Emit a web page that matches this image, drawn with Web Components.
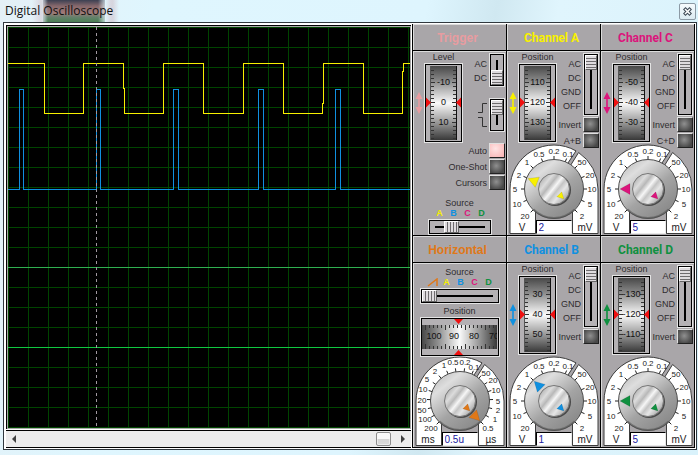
<!DOCTYPE html>
<html lang="en">
<head>
<meta charset="utf-8">
<title>Digital Oscilloscope</title>
<style>
  body { margin: 0; font-family: "Liberation Sans", Arial, sans-serif; font-size: 9px; color: #2e2b2e; }
</style>
</head>
<body>
<scope-window caption="Digital Oscilloscope">
  <scope-screen slot="screen"></scope-screen>
  <scope-scrollbar slot="screen"></scope-scrollbar>
  <trigger-panel></trigger-panel>
  <channel-panel name="Channel A" color="#f8f000" values="110,120,130" mix="A+B" angle="-68" reading="2"></channel-panel>
  <channel-panel name="Channel C" color="#dc147c" values="-50,-40,-30" mix="C+D" angle="-90" reading="5"></channel-panel>
  <horizontal-panel></horizontal-panel>
  <channel-panel name="Channel B" color="#1090e0" values="30,40,50" angle="-45" reading="1"></channel-panel>
  <channel-panel name="Channel D" color="#109040" values="-130,-120,-110" angle="-90" reading="5"></channel-panel>
</scope-window>

<script>
const define = (name, render) => customElements.define(name, class extends HTMLElement {
  connectedCallback() {
    if (this.shadowRoot) return;
    const t = document.createElement('template');
    t.innerHTML = render(n => this.getAttribute(n), this);
    this.attachShadow({ mode: 'open' }).append(t.content.cloneNode(true));
  }
});
const polar = (deg, r) => {
  const a = deg * Math.PI / 180;
  return [Math.round(Math.sin(a) * r * 10) / 10, Math.round(-Math.cos(a) * r * 10) / 10];
};

/* Window frame with its caption bar */
define('scope-window', a => `
<style>
  :host { display: flex; flex-direction: column; min-height: 100vh; box-sizing: border-box; padding: 0 1px 5px 3px;
    background:
      linear-gradient(90deg, transparent, #c9a9b455 8px 10px, transparent 14px) 32px 0 / 14px 22px no-repeat,
      linear-gradient(90deg, transparent, #c9a9b466 6px 8px, transparent 14px) 105px 0 / 14px 22px no-repeat,
      linear-gradient(90deg, #e0f5fccc, transparent 6px 56px, #e0f5fccc) 42px 0 / 64px 22px no-repeat,
      linear-gradient(#3c4052, #86686c 6px, #a07a78 13px, #66806c 17px, #4a8054 22px) 43px 0 / 62px 22px no-repeat,
      linear-gradient(100deg, #e4f0f6, #dff6fe 20%, #def5fe 55%, #d0e8f1 64%, #e0f5fd 72%, #d9f2fb); }
  header { display: flex; align-items: center; justify-content: space-between; height: 22px; padding-left: 2px; }
  h1 { margin: 0; font: 12px/22px "Open Sans", "Noto Sans", sans-serif; color: #111; }
  header button { width: 17px; height: 17px; margin-right: 1px; padding: 0; border: 1px solid #8c9aa5; border-radius: 2px;
    background: linear-gradient(#f6fbfd, #dcebf2); display: grid; place-items: center; }
  .frame { flex: 1; display: grid; grid-template-columns: minmax(0, 1fr) auto; border: 1px solid #30383e; background: #fff; padding: 1px 1px 1px 2px; }
  .left { display: flex; flex-direction: column; padding: 1px 1px 0 0; min-width: 0; }
  .right { display: grid; grid-template-columns: repeat(3, 93px); grid-auto-rows: 1fr; gap: 1px; background: #000; padding: 0 1px 1px; }
</style>
<header><h1>${a('caption')}</h1>
  <button aria-label="Close"><svg width="11" height="11" viewBox="0 0 11 11"><g fill="none" stroke-linecap="square"><path d="M3.500 3.500 7.500 7.500M7.500 3.500 3.500 7.500" stroke="#3c4854" stroke-width="3.500"/><path d="M3.500 3.500 7.500 7.500M7.500 3.500 3.500 7.500" stroke="#fff" stroke-width="1.500"/></g></svg></button>
</header>
<div class="frame"><div class="left"><slot name="screen"></slot></div><div class="right"><slot></slot></div></div>`);

/* Trace display */
define('scope-screen', () => `
<style>
  :host { flex: 1; display: flex; border: solid #000; border-width: 1px 0 0 1px; margin-bottom: 1px; }
  .crt { flex: 1; border: 1px solid #a8a8a8; background:
    linear-gradient(90deg, #004400 1px, transparent 1px) 0 0 / 20px 20px,
    linear-gradient(#004400 1px, transparent 1px) 0 0 / 20px 20px, #000; min-width: 0; overflow: hidden; }
  svg { display: block; width: 100%; height: 401px; }
</style>
<div class="crt"><svg shape-rendering="crispEdges" fill="none" stroke-width="1" role="img" aria-label="Traces">
  <path d="M0 320.5H2000" stroke="#10c840"/>
  <path d="M0 240.5H2000" stroke="#30b050"/>
  <path d="M0 162.5H11.5V62.5H15.5V162.5H88.5V62.5H92.5V162.5H165.5V62.5H170.5V162.5H250.5V62.5H255.5V162.5H327.5V62.5H332.5V162.5H2000" stroke="#1090e0"/>
  <path d="M0 36.5H36.5V86.5H75.5V36.5H115.5V61.5H116.5V86.5H155.5V36.5H195.5V86.5H235.5V36.5H275.5V86.5H314.5V76.5H315.5V36.5H355.5V86.5H394.5V44.5H395.5V36.5H402" stroke="#f8f000"/>
  <path d="M88.5 0V401" stroke="#a098a0" stroke-dasharray="3 3"/>
</svg></div>`);

define('scope-scrollbar', () => `
<style>
  :host { display: flex; align-items: center; height: 16px; border: solid #000; border-width: 1px 0; background: #ececec; }
  button { width: 16px; height: 16px; padding: 0; border: 0; background: none; display: grid; place-items: center; }
  input { flex: 1; min-width: 0; height: 16px; margin: 0; appearance: none; background: none; }
  input::-webkit-slider-thumb { appearance: none; width: 15px; height: 14px; box-sizing: border-box; border: 1px solid #8e8e8e; border-radius: 2px;
    background: linear-gradient(#f8f8f8 48%, #d4d4d4 52%, #dadada); box-shadow: inset 0 0 0 1px #fafafa88; }
</style>
<button aria-label="Scroll left"><svg width="6" height="8"><path d="M5 0V8L1 4Z" fill="#404040"/></svg></button>
<input type="range" min="0" max="100" value="99" aria-label="Time offset">
<button aria-label="Scroll right"><svg width="6" height="8"><path d="M1 0V8L5 4Z" fill="#404040"/></svg></button>`);

/* Heading bar above a body in which the dial sits at the foot */
define('control-panel', a => `
<style>
  :host { display: flex; flex-direction: column; background: #a9a6a9; height: 100%; }
  h2 { margin: 0; height: 26px; box-sizing: border-box; padding: 2px 4px 0 0; text-align: center; color: ${a('color')};
    font: bold 12px/25px ${a('face') || '"Liberation Sans"'}, sans-serif; box-shadow: inset 1px 1px #dcdcdc; }
  .body { flex: 1; min-height: 184px; display: grid; grid-template-columns: minmax(0, 1fr); border-top: 1px solid #000; box-shadow: inset 1px 1px #dcdcdc; }
  ::slotted(*) { grid-area: 1 / 1; }
</style>
<h2>${a('heading')}</h2><div class="body"><slot></slot></div>`);

const hue = { A: '#f8f000', B: '#1090e0', C: '#dc147c', D: '#109040' };

/* Thumb wheel with a scale, red index marks and an optional coloured arrow */
define('thumb-wheel', a => {
  const across = a('direction') === 'across', vals = a('values').split(',');
  let marks = '';
  if (across) {
    for (let i = 0, x = 5; x < 77; x += 4, i++) {
      const l = i % 5 === 0 ? 5 : 3;
      marks += `<path d="M${x}.5 8v${l}M${x}.5 32v${-l}"/>`;
    }
  } else {
    for (let y = 7, i = 0; y < 77; y += 4, i++) {
      const l = i % 5 === 3 ? 4 : 3;
      marks += `<path d="M7 ${y}.5h${l}M32 ${y}.5h${-l}"/>`;
    }
  }
  const nums = vals.map((v, i) => across ? `<text x="${14 + i * 20}" y="22">${v}</text>` : `<text x="19.5" y="${22 + i * 20}">${v}</text>`).join('');
  return `
<style>
  :host { display: grid; grid-template-columns: ${across ? 'auto' : '8px 39px'}; column-gap: 1px; justify-items: center; justify-content: center; }
  .name { grid-column: ${across ? 1 : 2}; line-height: 12px; white-space: nowrap; }
  .arrow { grid-column: 1; align-self: center; }
  .frame { display: block; box-sizing: border-box; grid-column: ${across ? 1 : 2}; }
  text { font: 9px "Liberation Sans", Arial, sans-serif; fill: #111; text-anchor: middle; }
</style>
<span class="name">${a('label')}</span>
${across ? '' : `<svg class="arrow" width="8" height="22" viewBox="0 0 8 22"><path d="M4 0 7.500 7H4.800V15H7.500L4 22 .5 15H3.200V7H.5Z" fill="${a('color')}"/></svg>`}
<svg class="frame" width="${across ? 80 : 39}" height="${across ? 40 : 80}" role="img" aria-label="${a('label')} ${vals[1]}">
  <defs><linearGradient id="g" ${across ? '' : 'x2="0" y2="1"'}><stop stop-color="#484848"/><stop offset=".2" stop-color="#8a8a8a"/><stop offset=".5" stop-color="#fafafa"/><stop offset=".8" stop-color="#8a8a8a"/><stop offset="1" stop-color="#383838"/></linearGradient>
  <clipPath id="c"><rect x="2" y="8" width="75" height="24"/></clipPath></defs>
  <rect x=".5" y=".5" width="${across ? 79 : 38}" height="${across ? 39 : 79}" fill="none" stroke="#e4e4e4"/>
  <rect x="1.5" y="1.5" width="${across ? 77 : 36}" height="${across ? 37 : 77}" fill="#b4b1b4" stroke="#000"/>
  ${across
    ? `<rect x="2" y="8" width="75" height="24" fill="url(#g)"/><g clip-path="url(#c)"><g stroke="#333" shape-rendering="crispEdges">${marks}</g>${nums}</g><path d="M34 2h9l-4.5 5zM34 38h9l-4.5-5z" fill="#f01010"/>`
    : `<rect x="7" y="3" width="25" height="74" fill="url(#g)"/><path d="M6.5 3v74" stroke="#555"/><path d="M32.5 3v74" stroke="#111"/><g stroke="#333" shape-rendering="crispEdges">${marks}</g>${nums}<path d="M2 34.500v10l5-5zM37 34.500v10l-5-5z" fill="#f01010"/>`}
</svg>`;
});

/* Slide switch; its position names go in the slot */
define('slide-switch', a => {
  const flat = a('direction') === 'across', len = a('length');
  return `
<style>
  :host { display: flex; gap: 2px; justify-content: flex-end; align-items: flex-start; }
  .names { display: grid; justify-items: end; line-height: 14px; padding-top: 4px; }
  .slot { box-sizing: border-box; width: ${flat ? len : 16}px; height: ${flat ? 16 : len}px; border: 1px solid #e4e4e4; background: #000; padding: 1px; }
  input { display: block; appearance: none; margin: 0; width: 100%; height: 100%; ${flat ? '' : 'writing-mode: vertical-lr;'}
    background: linear-gradient(#000, #000) center / ${flat ? 'calc(100% - 10px) 2px' : '2px calc(100% - 10px)'} no-repeat, #b4b1b4; }
  input::-webkit-slider-thumb { appearance: none; box-sizing: border-box; width: ${flat ? 15 : 12}px; height: ${flat ? 12 : 15}px;
    border: 1px solid; border-color: #fff #666 #666 #fff;
    background: repeating-linear-gradient(${flat ? '90deg' : '180deg'}, #dedbde 0 2px, #6e6c6e 2px 3px); }
</style>
<div class="names"><slot></slot></div>
<div class="slot"><input type="range" min="0" max="${a('max')}" value="${a('value')}" aria-label="${a('label')}"></div>`;
});

define('push-button', a => `
<style>
  :host { display: flex; justify-content: flex-end; }
  label { display: flex; align-items: center; gap: 2px; white-space: nowrap; }
  button { width: 16px; height: 15px; padding: 0; border: 1px solid; border-color: #e0e0e0 #222 #222 #e0e0e0;
    background: ${a('lit') !== null ? 'radial-gradient(circle at 40% 35%, #ffe4e4, #f8b0b0)' : 'radial-gradient(circle at 45% 45%, #909090, #484848 75%)'}; }
</style>
<label for="b">${a('label')}<button id="b"></button></label>`);

/* Rotary dial: white scale plates, a knob and a reading box */
define('rotary-dial', a => {
  const long = a('scale') === 'time';
  const marks = long
    ? [['200',-29,27],['100',-35,18],['50',-38,9],['20',-38,-1],['10',-37,-12],['5',-33,-22],['2',-25,-30],['1',-16,-36],['0.5',-7,-39],['0.2',5,-39],['0.1',14,-34],['50',26,-28],['20',33,-21],['10',36,-11],['5',38,0],['2',38,9],['1',35,18],['0.5',28,27]]
    : [['20',-29,27],['10',-37,15],['5',-39,0],['2',-35,-14],['1',-27,-27],['0.5',-15,-35],['0.2',0,-38],['0.1',14,-35],['50',28,-27],['20',36,-14],['10',38,0],['5',36,15],['2',28,27]];
  const texts = marks.map(([t, x, y]) => `<text x="${x}" y="${y + 3}">${t}</text>`).join('');
  const ticks = marks.map((m, i) => {
    const d = -135 + i * 270 / (marks.length - 1), p = polar(d, 28), q = polar(d, 33);
    return `M${p}L${q}`;
  }).join('');
  const [lo, li, ro, ri] = [polar(30, 44), polar(28, 28), polar(34, 44), polar(35, 28)];
  return `
<style>
  :host { display: grid; justify-items: center; align-items: end; align-self: end; justify-self: center; }
  svg { grid-area: 1 / 1; display: block; }
  text { font: 8px "Liberation Sans", Arial, sans-serif; fill: #222; text-anchor: middle; }
  .unit { font-size: 10px; }
  input { grid-area: 1 / 1; box-sizing: border-box; width: 36px; height: 14px; margin: 0 0 1px; padding: 0 0 0 2px; border: 1px solid; border-color: #000 #e8e8e8 #e8e8e8 #000;
    background: #fff; color: #2020a0; font: 10px/12px "Liberation Sans", Arial, sans-serif; }
</style>
<svg width="90" height="91" viewBox="-45 -45 90 91">
  <defs>
    <linearGradient id="k" x1=".1" y1="0" x2=".9" y2="1"><stop stop-color="#b8b8b8"/><stop offset=".22" stop-color="#dedede"/><stop offset=".55" stop-color="#a4a4a4"/><stop offset="1" stop-color="#828282"/></linearGradient>
    <linearGradient id="i" x1="0" y1=".1" x2="1" y2=".9"><stop stop-color="#9c9c9c"/><stop offset=".25" stop-color="#dcdcdc"/><stop offset=".36" stop-color="#b8b8b8"/><stop offset=".48" stop-color="#f6f6f6"/><stop offset=".58" stop-color="#c4c4c4"/><stop offset=".7" stop-color="#e6e6e6"/><stop offset="1" stop-color="#8c8c8c"/></linearGradient>
  </defs>
  <g fill="#fff" stroke="#3c3c3c">
    <path d="M-44 44.500V0A44 44 0 0 1 ${lo}L${li} 0 0-18.500 20V44.500Z"/>
    <path d="M44 44.500V0A44 44 0 0 0 ${ro}L${ri} 0 0 18.500 20V44.500Z"/>
  </g>
  <path d="${ticks}" stroke="#222" fill="none"/>
  ${texts}
  <text class="unit" x="-32" y="42">${long ? 'ms' : 'V'}</text><text class="unit" x="31" y="42">${long ? 'µs' : 'mV'}</text>
  <circle r="29.500" fill="url(#k)" stroke="#4c4c4c"/>
  <path d="M-20.500 20.500A29 29 0 0 0 20.500 20.500" fill="none" stroke="#555" stroke-width="2" opacity=".6"/>
  <circle cx="1" cy="1" r="16" fill="#4a4a4a"/>
  <circle r="15.500" fill="url(#i)" stroke="#777"/>
  <path d="M0-28 5.500-18H-5.500Z" transform="rotate(${a('angle')})" fill="${a('color')}" stroke="#0003" stroke-width=".5"/>
  <path d="M0-14 3.500-7.500H-3.500Z" transform="rotate(135)" fill="${a('color')}" stroke="#0003" stroke-width=".5"/>
</svg>
<input type="text" value="${a('reading')}" aria-label="Value per division">`;
});

/* Source picker: coloured letters above a horizontal slide switch */
define('source-select', a => `
<style>
  :host { display: grid; justify-items: center; row-gap: 1px; line-height: 10px; }
  .keys { display: grid; grid-auto-flow: column; grid-auto-columns: 14px; justify-items: center; font-weight: bold; height: 9px; line-height: 9px; padding-left: 2px; }
</style>
<span>Source</span>
<div class="keys">${a('ramp') !== null ? '<svg width="12" height="9"><path d="M1 8 10 1V8" fill="none" stroke="#e07818" stroke-width="1.500"/></svg>' : ''}
${Object.entries(hue).map(([k, c]) => `<span style="color:${c}">${k}</span>`).join('')}</div>
<slide-switch style="gap:0" direction="across" length="${a('length')}" max="${a('max')}" value="${a('value')}" label="Source"></slide-switch>`);

/* The wheel and the switches share one cell, so long button labels may run under the wheel */
const split = `
  .top { display: grid; grid-template-columns: minmax(0, 1fr); align-items: start; align-self: start; padding-right: 1px; }
  .top > * { grid-area: 1 / 1; }
  .side { display: grid; row-gap: 1px; padding-top: 2px; justify-self: end; }
  thumb-wheel { padding-left: 2px; justify-self: start; }`;

define('channel-panel', a => `
<style>:host { display: block; } ${split}</style>
<control-panel heading="${a('name')}" color="${a('color')}" face="Roboto">
  <div class="top">
    <thumb-wheel label="Position" values="${a('values')}" color="${a('color')}"></thumb-wheel>
    <div class="side">
      <slide-switch length="63" max="3" value="0" label="Coupling"><span>AC</span><span>DC</span><span>GND</span><span>OFF</span></slide-switch>
      <push-button label="Invert"></push-button>
      ${a('mix') ? `<push-button label="${a('mix')}"></push-button>` : ''}
    </div>
  </div>
  <rotary-dial color="${a('color')}" angle="${a('angle')}" reading="${a('reading')}"></rotary-dial>
</control-panel>`);

define('trigger-panel', () => `
<style>:host { display: block; } ${split}
  .side slide-switch { margin-bottom: 10px; }
  .foot { align-self: end; }
</style>
<control-panel heading="Trigger" color="#e89ca0">
  <div class="top">
    <thumb-wheel label="Level" values="-10,0,10" color="#e89ca0"></thumb-wheel>
    <div class="side">
      <slide-switch length="34" max="1" value="1" label="Coupling"><span>AC</span><span>DC</span></slide-switch>
      <slide-switch length="34" max="1" value="0" label="Edge"><svg width="9" height="28" fill="none" stroke="#333"><path d="M0 10.500H4.500V1.500H9M0 15.500H4.500V24.500H9"/></svg></slide-switch>
      <push-button label="Auto" lit></push-button>
      <push-button label="One-Shot"></push-button>
      <push-button label="Cursors"></push-button>
    </div>
  </div>
  <source-select class="foot" length="64" max="3" value="1"></source-select>
</control-panel>`);

define('horizontal-panel', () => `
<style>:host { display: block; }
  .top { align-self: start; display: grid; row-gap: 1px; padding-top: 4px; }
</style>
<control-panel heading="Horizontal" color="#e07818">
  <div class="top">
    <source-select ramp length="80" max="4" value="0"></source-select>
    <thumb-wheel direction="across" label="Position" values="100,90,80,70"></thumb-wheel>
  </div>
  <rotary-dial scale="time" color="#e07818" angle="135" reading="0.5u"></rotary-dial>
</control-panel>`);
</script>
</body>
</html>
